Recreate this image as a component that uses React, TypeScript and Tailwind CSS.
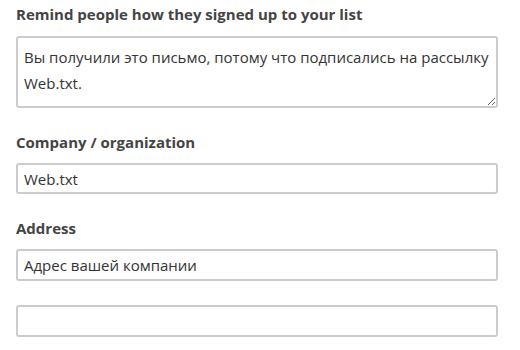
import React from 'react';

const FONT = "font-['Open_Sans',_'Liberation_Sans',_sans-serif]";

function Label({ children }: { children: React.ReactNode }) {
  return (
    <label className="block h-5 text-[15px] leading-5 font-bold text-[#444]">{children}</label>
  );
}

export default function App() {
  return (
    <div className={`${FONT} bg-white px-4 pt-1 w-[520px] h-[350px] overflow-hidden`}>
      <Label>Remind people how they signed up to your list</Label>
      <textarea
        className="mt-3 block w-[482px] h-[72px] border-2 border-[#ccc] rounded-[3px] px-[6px] py-[6px] text-[15px] leading-[26px] text-[#333] outline-none"
        defaultValue="Вы получили это письмо, потому что подписались на рассылку Web.txt."
      />
      <div className="mt-6">
        <Label>Company / organization</Label>
        <input
          className="mt-[11px] block w-[482px] h-[31px] border-2 border-[#ccc] rounded-[3px] px-[6px] text-[15px] text-[#333] outline-none"
          defaultValue="Web.txt"
        />
      </div>
      <div className="mt-6">
        <Label>Address</Label>
        <input
          className="mt-[11px] block w-[482px] h-[32px] border-2 border-[#ccc] rounded-[3px] px-[6px] text-[15px] text-[#333] outline-none"
          defaultValue="Адрес вашей компании"
        />
        <input
          className="mt-6 block w-[482px] h-[32px] border-2 border-[#ccc] rounded-[3px] px-[6px] text-[15px] text-[#333] outline-none"
          defaultValue=""
        />
      </div>
    </div>
  );
}
